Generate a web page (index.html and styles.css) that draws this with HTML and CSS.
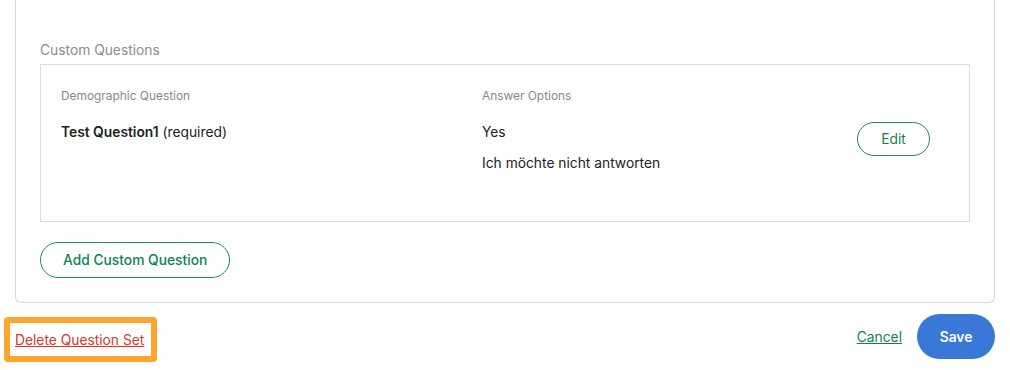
FILE: index.html
```html
<!DOCTYPE html>
<html lang="en">

<head>
    <meta charset="UTF-8">
    <meta name="viewport" content="width=device-width, initial-scale=1.0">
    <title>Question Set</title>
    <link rel="stylesheet" href="styles.css">
</head>

<body>
    <div class="panel">
        <div class="section-label">Custom Questions</div>

        <div class="question-table">
            <div class="col-head">Demographic Question</div>
            <div class="col-head">Answer Options</div>
            <div></div>

            <div class="question-name"><strong>Test Question1</strong> (required)</div>
            <div class="answers">
                <div>Yes</div>
                <div>Ich möchte nicht antworten</div>
            </div>
            <div class="row-actions">
                <button class="btn-outline btn-edit">Edit</button>
            </div>
        </div>

        <button class="btn-outline btn-add">Add Custom Question</button>
    </div>

    <div class="footer">
        <div class="highlight">
            <a href="#" class="link-danger">Delete Question Set</a>
        </div>
        <div class="footer-actions">
            <a href="#" class="link-cancel">Cancel</a>
            <button class="btn-save">Save</button>
        </div>
    </div>
</body>

</html>
```

FILE: styles.css
```css
body {
    font-family: 'Inter', 'Liberation Sans', sans-serif;
    margin: 0;
    color: #1e0a3c;
    background-color: white;
}

.panel {
    margin: 0 15px;
    padding: 42px 24px 24px 24px;
    border: 1px solid #d6dada;
    border-top: none;
    border-radius: 0 0 6px 6px;
}

.section-label {
    font-size: 13.8px;
    color: #8c8c8c;
    line-height: 16px;
    margin-bottom: 6px;
}

.question-table {
    display: grid;
    grid-template-columns: 421px 1fr auto;
    border: 1px solid #dcdcdc;
    padding: 23px 39px 50px 20px;
    font-size: 13.8px;
    color: #222;
}

.col-head {
    font-size: 11.9px;
    color: #888;
    line-height: 16px;
    margin-bottom: 20px;
}

.question-name {
    line-height: 16px;
}

.question-name strong {
    font-weight: 600;
}

.answers {
    display: flex;
    flex-direction: column;
    gap: 15px;
    line-height: 16px;
}

.row-actions {
    margin-top: -2px;
}

.btn-outline {
    font-family: inherit;
    background-color: white;
    color: #0f7f58;
    border: 1px solid #1d8a62;
    border-radius: 20px;
    cursor: pointer;
}

.btn-edit {
    width: 73px;
    height: 34px;
    font-size: 13.8px;
}

.btn-add {
    margin-top: 20px;
    height: 36px;
    padding: 0 22px;
    font-size: 13.8px;
    font-weight: 500;
}

.footer {
    display: flex;
    justify-content: space-between;
    align-items: flex-start;
    padding: 11px 15px 0 4px;
}

.highlight {
    border: 6px solid #ffa42c;
    border-radius: 4px;
    padding: 0 7px 0 5px;
    height: 33px;
    display: flex;
    align-items: center;
    margin-top: 3px;
}

.link-danger {
    color: #d9362b;
    font-size: 13.8px;
}

.footer-actions {
    display: flex;
    align-items: center;
    gap: 15px;
}

.link-cancel {
    color: #0f7f58;
    font-size: 13.8px;
}

.btn-save {
    font-family: inherit;
    width: 78px;
    height: 45px;
    border: none;
    border-radius: 23px;
    background-color: #3a78d8;
    color: white;
    font-size: 13.8px;
    font-weight: 600;
    cursor: pointer;
}
```
